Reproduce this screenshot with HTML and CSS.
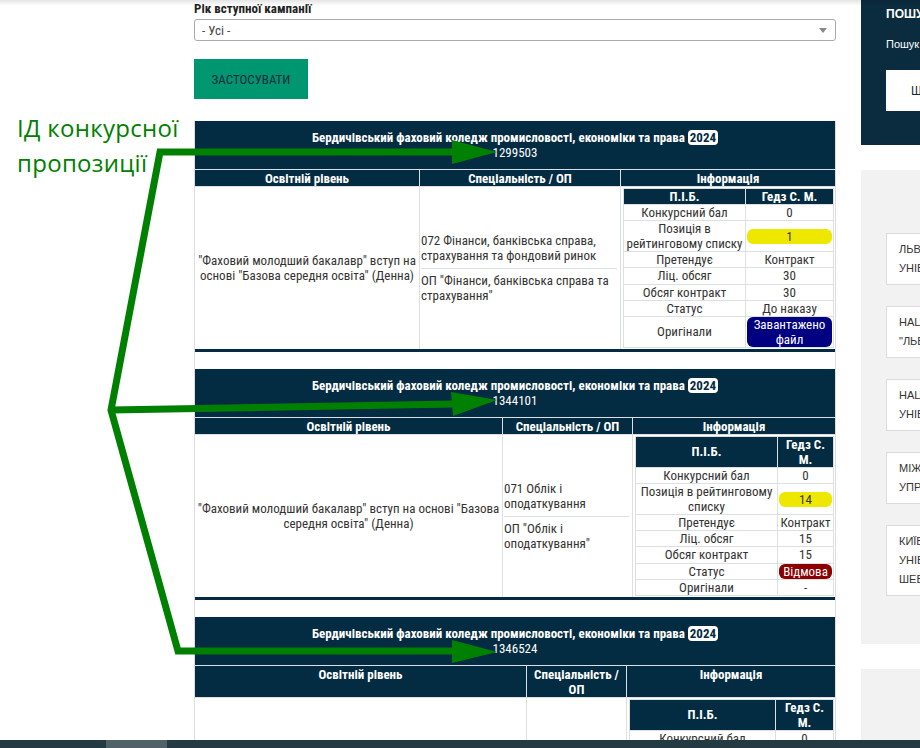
FILE: index.html
```html
<!DOCTYPE html>
<html lang="uk">
<head>
<meta charset="utf-8">
<title>Конкурсні пропозиції</title>
<link rel="stylesheet" href="styles.css">
</head>
<body>
<div class="page">
  <aside class="note">
    <p class="note-text">ІД конкурсної<br>пропозиції</p>
  </aside>

  <main class="main">
    <form class="filter">
      <label class="filter-label">Рік вступної кампанії</label>
      <div class="select"><span>- Усі -</span><span class="caret"></span></div>
      <button type="button" class="apply">ЗАСТОСУВАТИ</button>
    </form>

    <div class="results">
      <section class="offer offer-a">
        <header class="offer-head">
          <div class="offer-title">Бердичівський фаховий коледж промисловості, економіки та права <span class="year">2024</span></div>
          <div class="offer-id">1299503</div>
        </header>
        <div class="colh">Освітній рівень</div>
        <div class="colh">Спеціальність / ОП</div>
        <div class="colh">Інформація</div>
        <div class="level">"Фаховий молодший бакалавр" вступ на основі "Базова середня освіта" (Денна)</div>
        <div class="spec">
          <div class="spec-top">072 Фінанси, банківська справа, страхування та фондовий ринок</div>
          <div class="spec-bottom">ОП "Фінанси, банківська справа та страхування"</div>
        </div>
        <div class="info">
          <table class="info-table">
            <colgroup><col class="kcol"><col></colgroup>
            <tr><th>П.І.Б.</th><th>Гедз С. М.</th></tr>
            <tr><td>Конкурсний бал</td><td>0</td></tr>
            <tr><td>Позиція в рейтинговому списку</td><td><span class="pill pill-yellow">1</span></td></tr>
            <tr><td>Претендує</td><td>Контракт</td></tr>
            <tr><td>Ліц. обсяг</td><td>30</td></tr>
            <tr><td>Обсяг контракт</td><td>30</td></tr>
            <tr><td>Статус</td><td>До наказу</td></tr>
            <tr><td>Оригінали</td><td><span class="pill pill-navy">Завантажено файл</span></td></tr>
          </table>
        </div>
      </section>

      <section class="offer offer-b">
        <header class="offer-head">
          <div class="offer-title">Бердичівський фаховий коледж промисловості, економіки та права <span class="year">2024</span></div>
          <div class="offer-id">1344101</div>
        </header>
        <div class="colh">Освітній рівень</div>
        <div class="colh">Спеціальність / ОП</div>
        <div class="colh">Інформація</div>
        <div class="level">"Фаховий молодший бакалавр" вступ на основі "Базова середня освіта" (Денна)</div>
        <div class="spec">
          <div class="spec-top">071 Облік і оподаткування</div>
          <div class="spec-bottom">ОП "Облік і оподаткування"</div>
        </div>
        <div class="info">
          <table class="info-table">
            <colgroup><col class="kcol"><col></colgroup>
            <tr><th>П.І.Б.</th><th>Гедз С. М.</th></tr>
            <tr><td>Конкурсний бал</td><td>0</td></tr>
            <tr><td>Позиція в рейтинговому списку</td><td><span class="pill pill-yellow">14</span></td></tr>
            <tr><td>Претендує</td><td>Контракт</td></tr>
            <tr><td>Ліц. обсяг</td><td>15</td></tr>
            <tr><td>Обсяг контракт</td><td>15</td></tr>
            <tr><td>Статус</td><td><span class="pill pill-red">Відмова</span></td></tr>
            <tr><td>Оригінали</td><td>-</td></tr>
          </table>
        </div>
      </section>

      <section class="offer offer-c">
        <header class="offer-head">
          <div class="offer-title">Бердичівський фаховий коледж промисловості, економіки та права <span class="year">2024</span></div>
          <div class="offer-id">1346524</div>
        </header>
        <div class="colh">Освітній рівень</div>
        <div class="colh">Спеціальність / ОП</div>
        <div class="colh">Інформація</div>
        <div class="level">"Фаховий молодший бакалавр" вступ на основі "Базова середня освіта" (Денна)</div>
        <div class="spec">
          <div class="spec-top">071 Облік і оподаткування</div>
          <div class="spec-bottom">ОП "Облік і оподаткування"</div>
        </div>
        <div class="info">
          <table class="info-table">
            <colgroup><col class="kcol"><col></colgroup>
            <tr><th>П.І.Б.</th><th>Гедз С. М.</th></tr>
            <tr><td>Конкурсний бал</td><td>0</td></tr>
            <tr><td>Позиція в рейтинговому списку</td><td><span class="pill pill-yellow">9</span></td></tr>
            <tr><td>Претендує</td><td>Контракт</td></tr>
            <tr><td>Ліц. обсяг</td><td>25</td></tr>
            <tr><td>Обсяг контракт</td><td>25</td></tr>
            <tr><td>Статус</td><td>До наказу</td></tr>
            <tr><td>Оригінали</td><td>-</td></tr>
          </table>
        </div>
      </section>
    </div>
  </main>

  <aside class="side">
    <div class="search-box">
      <h3 class="search-title">ПОШУК</h3>
      <p class="search-text">Пошук конкурсних пропозицій</p>
      <div class="search-btn">ЩО ШУКАЄТЕ?</div>
    </div>
    <div class="uni-box">
      <div class="uni"><span>ЛЬВІВСЬКИЙ НАЦІОНАЛЬНИЙ</span><span>УНІВЕРСИТЕТ ІМЕНІ ІВАНА ФРАНКА</span></div>
      <div class="uni"><span>НАЦІОНАЛЬНИЙ УНІВЕРСИТЕТ</span><span>"ЛЬВІВСЬКА ПОЛІТЕХНІКА"</span></div>
      <div class="uni"><span>НАЦІОНАЛЬНИЙ АВІАЦІЙНИЙ</span><span>УНІВЕРСИТЕТ</span></div>
      <div class="uni"><span>МІЖРЕГІОНАЛЬНА АКАДЕМІЯ</span><span>УПРАВЛІННЯ ПЕРСОНАЛОМ</span></div>
      <div class="uni"><span>КИЇВСЬКИЙ НАЦІОНАЛЬНИЙ</span><span>УНІВЕРСИТЕТ ІМЕНІ ТАРАСА</span><span>ШЕВЧЕНКА</span></div>
    </div>
    <div class="uni-box uni-box-2"></div>
  </aside>
</div>

<svg class="arrows" width="920" height="748" viewBox="0 0 920 748" aria-hidden="true">
  <polyline points="455,152 160,152 111,410 178,651 455,651" fill="none" stroke="#008000" stroke-width="7" stroke-linejoin="miter"/>
  <line x1="111" y1="410" x2="455" y2="404" stroke="#008000" stroke-width="7"/>
  <polygon points="452,140 497,152 452,164" fill="#008000"/>
  <polygon points="451,392 497,400 453,416" fill="#008000"/>
  <polygon points="452,640 497,652 452,663" fill="#008000"/>
</svg>

<div class="top-shadow"></div>
<div class="hscroll"><div class="hscroll-thumb"></div></div>
</body>
</html>
```

FILE: styles.css
```css
html, body {
  margin: 0;
  padding: 0;
  overflow: hidden;
  background: #fff;
}

body {
  font-family: "Roboto Condensed", "Liberation Sans Narrow", "Arial Narrow", Roboto, sans-serif;
  font-size: 13px;
  color: #333;
}

.page {
  display: flex;
  align-items: flex-start;
  width: 1200px;
}

/* annotation */
.note {
  width: 194px;
  flex: none;
  box-sizing: border-box;
  padding: 110px 0 0 17px;
}

.note-text {
  margin: 0;
  font-family: "Open Sans", "Noto Sans", sans-serif;
  font-size: 24px;
  line-height: 35px;
  letter-spacing: 0.3px;
  color: #008000;
}

/* main column */
.main {
  width: 642px;
  flex: none;
}

.filter {
  margin: 0;
}

.filter-label {
  display: block;
  font-weight: bold;
  line-height: 17px;
  color: #222;
  margin-bottom: 2px;
}

.select {
  box-sizing: border-box;
  height: 22px;
  border: 1px solid #aaa;
  border-radius: 3px;
  display: flex;
  align-items: center;
  justify-content: space-between;
  padding: 0 8px 0 7px;
  color: #444;
}

.caret {
  width: 0;
  height: 0;
  border-left: 4px solid transparent;
  border-right: 4px solid transparent;
  border-top: 5px solid #888;
}

.apply {
  display: block;
  margin-top: 18px;
  width: 114px;
  height: 40px;
  border: 0;
  background: #00966f;
  color: #0c2c40;
  font-family: inherit;
  font-size: 13px;
  padding: 0;
}

.results {
  margin-top: 22px;
  border-left: 1px solid #dcdce4;
  border-right: 1px solid #dcdce4;
  min-height: 700px;
}

/* offer card */
.offer {
  display: grid;
  gap: 1px;
  background: #dcdfe4;
  border-bottom: 3px solid #032b42;
  margin-bottom: 17px;
}

.offer-a { grid-template-columns: 224px 200px 214px; }
.offer-b { grid-template-columns: 307px 129px 202px; }
.offer-c { grid-template-columns: 331px 99px 208px; }

.offer-head {
  grid-column: 1 / -1;
  background: #032b42;
  color: #fff;
  text-align: center;
  padding: 9px 0;
  line-height: 15px;
}

.offer-title {
  font-weight: bold;
}

.year {
  background: #fff;
  color: #032b42;
  border-radius: 4px;
  padding: 0 2px;
}

.colh {
  background: #032b42;
  color: #fff;
  font-weight: bold;
  text-align: center;
  line-height: 15px;
  padding-top: 1px;
}

.level {
  background: #fff;
  display: flex;
  align-items: center;
  justify-content: center;
  text-align: center;
  line-height: 15px;
  padding: 0 1px;
}

.spec {
  background: #fff;
  display: grid;
  grid-template-rows: 1fr 1fr;
  line-height: 15px;
  padding: 0 3px 0 1px;
}

.spec-top {
  display: flex;
  align-items: flex-end;
  padding-bottom: 5px;
}

.spec-bottom {
  border-top: 1px solid #dcdfe4;
  padding-top: 4px;
}

.info {
  background: #fff;
  padding: 1px 1px 1px 2px;
}

.info-table {
  width: 100%;
  border-collapse: collapse;
  table-layout: fixed;
}

.offer-a .kcol { width: 122px; }
.offer-b .kcol { width: 142px; }
.offer-c .kcol { width: 146px; }

.info-table th,
.info-table td {
  border: 1px solid #dcdfe4;
  text-align: center;
  padding: 0;
  line-height: 15.1px;
  font-size: 13px;
}

.info-table th {
  background: #032b42;
  color: #fff;
  font-weight: bold;
  padding: 0 3px;
}

.pill {
  display: block;
  margin: 0 1px;
  border-radius: 6px;
  line-height: 15px;
}

.pill-yellow {
  background: #eee800;
  color: #333;
}

.pill-navy {
  background: #000080;
  color: #fff;
}

.pill-red {
  background: #8b0000;
  color: #fff;
}

/* sidebar */
.side {
  width: 300px;
  flex: none;
  margin-left: 25px;
  font-family: "Liberation Sans", Arial, sans-serif;
}

.search-box {
  background: #0b2c3f;
  color: #fff;
  padding: 5px 25px 34px;
}

.search-title {
  margin: 0;
  font-size: 12px;
  line-height: 18px;
  font-weight: bold;
}

.search-text {
  margin: 14px 0 0;
  font-size: 11px;
  line-height: 14px;
}

.search-btn {
  margin-top: 19px;
  height: 41px;
  background: #fff;
  color: #0b2c3f;
  display: flex;
  align-items: center;
  padding-left: 25px;
  font-size: 12px;
}

.uni-box {
  margin-top: 25px;
  background: #f2f2f2;
  padding: 63px 0 48px 25px;
  display: flex;
  flex-direction: column;
  gap: 21px;
}

.uni {
  background: #fff;
  border: 1px solid #dcdcdc;
  padding: 6px 12px;
  font-size: 11px;
  line-height: 19px;
  color: #333;
  display: flex;
  flex-direction: column;
  white-space: nowrap;
}

.uni-box-2 {
  height: 200px;
  padding: 0;
}

/* overlays */
.arrows {
  position: absolute;
  left: 0;
  top: 0;
  pointer-events: none;
}

.top-shadow {
  position: fixed;
  left: 0;
  top: 0;
  width: 100%;
  height: 6px;
  background: linear-gradient(rgba(0, 0, 0, 0.1), rgba(0, 0, 0, 0));
}

.hscroll {
  position: fixed;
  left: 0;
  bottom: 0;
  width: 100%;
  height: 8px;
  background: #243a42;
}

.hscroll-thumb {
  margin-left: 106px;
  width: 61px;
  height: 8px;
  background: #4e6268;
}
```
